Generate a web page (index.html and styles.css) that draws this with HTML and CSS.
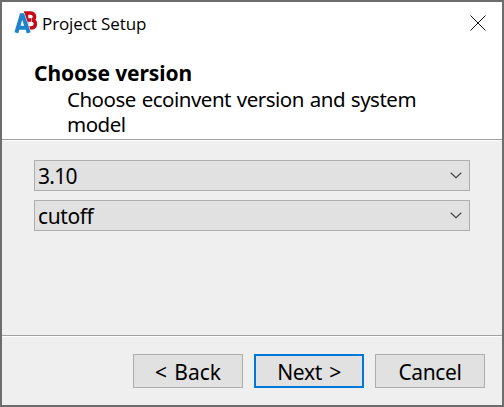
FILE: index.html
```
<!DOCTYPE html>
<html lang="en">
<head>
<meta charset="utf-8">
<title>Project Setup</title>
<link rel="stylesheet" href="styles.css">
</head>
<body>
<div class="window">
  <header class="titlebar">
    <svg class="logo" width="24" height="24" viewBox="0 0 24 24" fill="none">
      <path d="M13.5 2V17H17.5C23.8 17 23.8 9.4 18.8 9C22.6 8 22.6 2 17.2 2H11M13.5 9H18" stroke="#c40d1b" stroke-width="3.6"/>
      <path d="M3.4 21.8L8.5 4.3H9.7L15.8 21.8M5 16.8H14" stroke="#fff" stroke-width="5"/>
      <path d="M3.4 21.8L8.5 4.3H9.7L15.8 21.8M5 16.8H14" stroke="#1d83cb" stroke-width="4"/>
    </svg>
    <span class="title">Project Setup</span>
    <svg class="close" width="16" height="16" viewBox="0 0 16 16"><path d="M.5 .5L15.5 15.5M15.5 .5L.5 15.5" stroke="#111" stroke-width="1"/></svg>
  </header>
  <section class="heading">
    <h1>Choose version</h1>
    <p>Choose ecoinvent version and system<br>model</p>
  </section>
  <main class="content">
    <div class="combo"><span class="version">3.10</span><svg width="12" height="7" viewBox="0 0 12 7"><path d="M.7 .7L6 5.7L11.3 .7" fill="none" stroke="#444" stroke-width="1.2"/></svg></div>
    <div class="combo"><span class="model">cutoff</span><svg width="12" height="7" viewBox="0 0 12 7"><path d="M.7 .7L6 5.7L11.3 .7" fill="none" stroke="#444" stroke-width="1.2"/></svg></div>
  </main>
  <footer class="actions">
    <button class="back">&lt; Back</button>
    <button class="primary">Next &gt;</button>
    <button>Cancel</button>
  </footer>
</div>
</body>
</html>
```
FILE: styles.css
```
* { box-sizing: border-box; }
body { margin: 0; font-family: "Noto Sans", sans-serif; font-size: 21px; color: #000; }
.window { width: 504px; height: 407px; border: 2px solid #6d6d6d; background: #efefef; display: flex; flex-direction: column; }
.titlebar { height: 44px; flex: none; background: #fff; display: flex; align-items: center; padding: 0 16px 2px 11px; }
.logo { display: block; margin-right: 5px; }
.title { font-family: "Open Sans", sans-serif; font-size: 17px; line-height: 24px; letter-spacing: -0.1px; padding-top: 1px; }
.close { margin-left: auto; }
.heading { height: 93px; flex: none; background: #fff; padding: 14px 0 0 32px; }
h1 { margin: 0; font-size: 21px; line-height: 26px; font-weight: 700; letter-spacing: -0.1px; }
p { margin: 1px 0 0 33px; font-size: 20.5px; line-height: 25px; white-space: nowrap; letter-spacing: -0.5px; word-spacing: 1px; }
.content { height: 196px; flex: none; border-top: 1px solid #a0a0a0; box-shadow: inset 0 1px #fff; padding: 20px 32px 0; display: flex; flex-direction: column; gap: 9px; }
.combo { height: 31px; background: #e1e1e1; border: 1px solid #adadad; display: flex; align-items: center; justify-content: space-between; padding: 0 7px 0 3px; line-height: 28px; }
.version { letter-spacing: -0.7px; }
.model { letter-spacing: -0.4px; padding-top: 1px; }
.actions { flex: 1; border-top: 1px solid #a0a0a0; box-shadow: inset 0 1px #fff; display: flex; justify-content: flex-end; gap: 11px; padding: 18px 17px 0 0; }
button { width: 110px; height: 34px; margin: 0; padding: 2px 0 0; background: #e1e1e1; border: 1px solid #adadad; border-radius: 0; font: inherit; line-height: 28px; letter-spacing: -0.4px; color: #000; }
.back { letter-spacing: 0; word-spacing: 2px; }
.primary { border: 2px solid #0078d7; letter-spacing: -0.3px; word-spacing: 2px; }
```
